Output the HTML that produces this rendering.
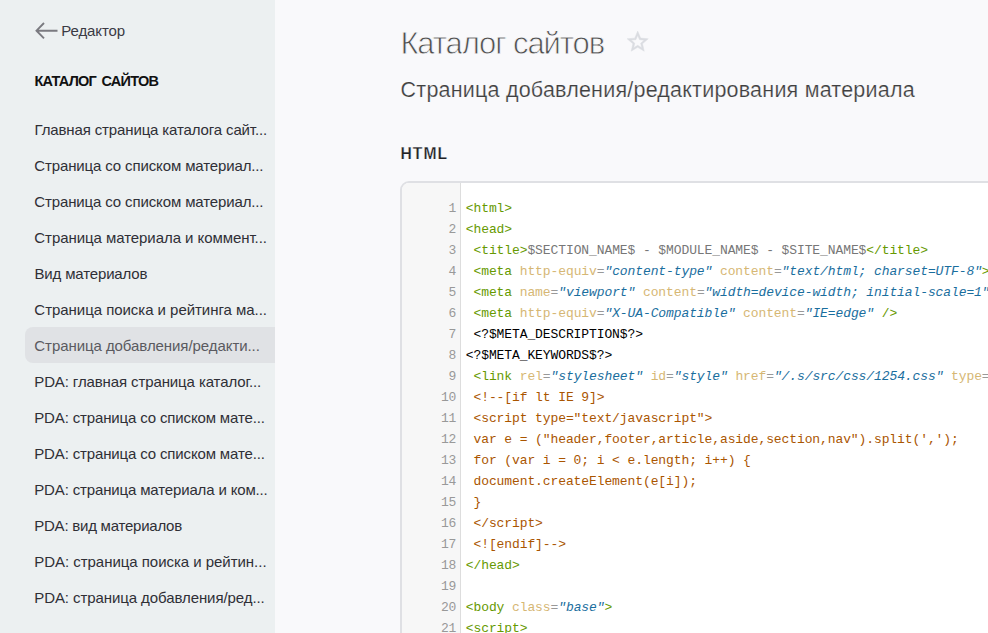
<!DOCTYPE html>
<html lang="ru">
<head>
<meta charset="utf-8">
<title>Каталог сайтов</title>
<style>
html,body{margin:0;padding:0;}
body{width:988px;height:633px;overflow:hidden;background:#f9f9fb;font-family:"Liberation Sans",sans-serif;color:#333;position:relative;}
#side{position:absolute;left:0;top:0;width:275px;height:633px;background:#ecf0f1;}
#side div,#main>div.h1,#main>div.h2,#main>div.h3{position:absolute;white-space:pre;}
.back{color:#3a3a44;}
.arrow{position:absolute;left:34.6px;top:22px;}
.sect{color:#111;}
.it{color:#2f2f36;}
.sel{left:25px;top:327px;width:250px;height:36px;background:#e0e2e5;border-radius:8px 0 0 8px;}
.h1{color:#505050;-webkit-text-stroke:0.8px #f9f9fb;}
.h2{color:#404040;-webkit-text-stroke:0.2px #f9f9fb;}
.h3{color:#202024;-webkit-text-stroke:0.25px #f9f9fb;}
.star{position:absolute;left:624.75px;top:29.35px;}
#ed{position:absolute;left:400px;top:181px;width:620px;height:480px;border:2px solid #dfe0e4;border-radius:9px 0 0 0;background:#fff;overflow:hidden;box-sizing:border-box;}
#gut{position:absolute;left:0;top:0;width:59px;height:100%;background:#f7f7f7;border-right:1px solid #dddddd;box-sizing:border-box;}
.ln{position:absolute;left:0;width:54.3px;text-align:right;font-family:"Liberation Mono",monospace;font-size:13px;line-height:21px;color:#999;letter-spacing:-0.1px;}
.cl{position:absolute;left:63.8px;font-family:"Liberation Mono",monospace;font-size:13px;line-height:21px;white-space:pre;letter-spacing:-0.1px;color:#000;}
.t{color:#690;} .a{color:#d6b774;} .p{color:#999;} .s{color:#1a6e9e;font-style:italic;} .g{color:#777;} .c{color:#a50;}
</style>
</head>
<body>
<div id="side">
<svg class="arrow" width="24" height="18" viewBox="0 0 24 18"><path d="M9 1 L1.5 8.7 L9 16.4 M1.5 8.7 H22.5" fill="none" stroke="#7a7a80" stroke-width="1.9"/></svg>
<div class="back" style="left:61.3px;top:22px;letter-spacing:-0.114px;font-size:15px;line-height:18px;">Редактор</div>
<div class="sect" style="left:34.4px;top:72px;letter-spacing:-0.738px;font-size:14.5px;line-height:18px;font-weight:bold;word-spacing:2px;">КАТАЛОГ САЙТОВ</div>
<div class="sel"></div>
<div class="it" style="left:34.5px;top:120.6px;letter-spacing:-0.131px;font-size:15px;line-height:18px;">Главная страница каталога сайт...</div>
<div class="it" style="left:34.35px;top:156.6px;letter-spacing:-0.13px;font-size:15px;line-height:18px;">Страница со списком материал...</div>
<div class="it" style="left:34.35px;top:192.6px;letter-spacing:-0.13px;font-size:15px;line-height:18px;">Страница со списком материал...</div>
<div class="it" style="left:34.35px;top:228.6px;letter-spacing:-0.06px;font-size:15px;line-height:18px;">Страница материала и коммент...</div>
<div class="it" style="left:34.5px;top:264.6px;letter-spacing:-0.154px;font-size:15px;line-height:18px;">Вид материалов</div>
<div class="it" style="left:34.35px;top:300.6px;letter-spacing:-0.039px;font-size:15px;line-height:18px;">Страница поиска и рейтинга ма...</div>
<div class="it" style="left:34.35px;top:336.6px;letter-spacing:-0.066px;font-size:15px;line-height:18px;color:#5a5a60;">Страница добавления/редакти...</div>
<div class="it" style="left:34.25px;top:372.6px;letter-spacing:-0.113px;font-size:15px;line-height:18px;">PDA: главная страница каталог...</div>
<div class="it" style="left:34.25px;top:408.6px;letter-spacing:-0.145px;font-size:15px;line-height:18px;">PDA: страница со списком мате...</div>
<div class="it" style="left:34.25px;top:444.6px;letter-spacing:-0.145px;font-size:15px;line-height:18px;">PDA: страница со списком мате...</div>
<div class="it" style="left:34.25px;top:480.6px;letter-spacing:-0.148px;font-size:15px;line-height:18px;">PDA: страница материала и ком...</div>
<div class="it" style="left:34.25px;top:516.6px;letter-spacing:-0.233px;font-size:15px;line-height:18px;">PDA: вид материалов</div>
<div class="it" style="left:34.25px;top:552.6px;letter-spacing:-0.035px;font-size:15px;line-height:18px;">PDA: страница поиска и рейтин...</div>
<div class="it" style="left:34.25px;top:588.6px;letter-spacing:-0.083px;font-size:15px;line-height:18px;">PDA: страница добавления/ред...</div>
</div>
<div id="main">
<div class="h1" style="left:400.4px;top:25.2px;letter-spacing:-1.085px;font-size:31px;line-height:38px;">Каталог сайтов</div>
<svg class="star" width="25.4" height="25.4" viewBox="0 0 24 24"><path d="M22 9.24l-7.19-.62L12 2 9.19 8.63 2 9.24l5.46 4.73L5.820 21 12 17.27 18.18 21l-1.63-7.03L22 9.24zM12 15.4l-3.76 2.27 1-4.28-3.32-2.880 4.380-.38L12 6.100l1.710 4.040 4.380.38-3.320 2.880 1 4.280L12 15.400z" fill="#dadce1" stroke="#dadce1" stroke-width="0.45" stroke-linejoin="miter"/></svg>
<div class="h2" style="left:400.6px;top:76px;letter-spacing:0.212px;font-size:21.5px;line-height:28px;">Страница добавления/редактирования материала</div>
<div class="h3" style="left:400.4px;top:145.3px;letter-spacing:1.067px;font-size:15.7px;line-height:18px;font-weight:bold;">HTML</div>
<div id="ed">
<div id="gut"></div>
<div id="lines">
<div class="ln" style="top:15px">1</div><div class="cl" style="top:15px"><span class="t">&lt;html&gt;</span></div>
<div class="ln" style="top:36px">2</div><div class="cl" style="top:36px"><span class="t">&lt;head&gt;</span></div>
<div class="ln" style="top:57px">3</div><div class="cl" style="top:57px"> <span class="t">&lt;title&gt;</span><span class="g">$SECTION_NAME$ - $MODULE_NAME$ - $SITE_NAME$</span><span class="t">&lt;/title&gt;</span></div>
<div class="ln" style="top:78px">4</div><div class="cl" style="top:78px"> <span class="t">&lt;meta</span> <span class="a">http-equiv</span><span class="p">=</span><span class="s">"content-type"</span> <span class="a">content</span><span class="p">=</span><span class="s">"text/html; charset=UTF-8"</span><span class="t">&gt;</span></div>
<div class="ln" style="top:99px">5</div><div class="cl" style="top:99px"> <span class="t">&lt;meta</span> <span class="a">name</span><span class="p">=</span><span class="s">"viewport"</span> <span class="a">content</span><span class="p">=</span><span class="s">"width=device-width; initial-scale=1"</span><span class="t">&gt;</span></div>
<div class="ln" style="top:120px">6</div><div class="cl" style="top:120px"> <span class="t">&lt;meta</span> <span class="a">http-equiv</span><span class="p">=</span><span class="s">"X-UA-Compatible"</span> <span class="a">content</span><span class="p">=</span><span class="s">"IE=edge"</span> <span class="t">/&gt;</span></div>
<div class="ln" style="top:141px">7</div><div class="cl" style="top:141px"> &lt;?$META_DESCRIPTION$?&gt;</div>
<div class="ln" style="top:162px">8</div><div class="cl" style="top:162px">&lt;?$META_KEYWORDS$?&gt;</div>
<div class="ln" style="top:183px">9</div><div class="cl" style="top:183px"> <span class="t">&lt;link</span> <span class="a">rel</span><span class="p">=</span><span class="s">"stylesheet"</span> <span class="a">id</span><span class="p">=</span><span class="s">"style"</span> <span class="a">href</span><span class="p">=</span><span class="s">"/.s/src/css/1254.css"</span> <span class="a">type</span><span class="p">=</span><span class="s">"text/css"</span> <span class="t">/&gt;</span></div>
<div class="ln" style="top:204px">10</div><div class="cl" style="top:204px"> <span class="c">&lt;!--[if lt IE 9]&gt;</span></div>
<div class="ln" style="top:225px">11</div><div class="cl" style="top:225px"> <span class="c">&lt;script type="text/javascript"&gt;</span></div>
<div class="ln" style="top:246px">12</div><div class="cl" style="top:246px"> <span class="c">var e = ("header,footer,article,aside,section,nav").split(',');</span></div>
<div class="ln" style="top:267px">13</div><div class="cl" style="top:267px"> <span class="c">for (var i = 0; i &lt; e.length; i++) {</span></div>
<div class="ln" style="top:288px">14</div><div class="cl" style="top:288px"> <span class="c">document.createElement(e[i]);</span></div>
<div class="ln" style="top:309px">15</div><div class="cl" style="top:309px"> <span class="c">}</span></div>
<div class="ln" style="top:330px">16</div><div class="cl" style="top:330px"> <span class="c">&lt;/script&gt;</span></div>
<div class="ln" style="top:351px">17</div><div class="cl" style="top:351px"> <span class="c">&lt;![endif]--&gt;</span></div>
<div class="ln" style="top:372px">18</div><div class="cl" style="top:372px"><span class="t">&lt;/head&gt;</span></div>
<div class="ln" style="top:393px">19</div><div class="cl" style="top:393px"></div>
<div class="ln" style="top:414px">20</div><div class="cl" style="top:414px"><span class="t">&lt;body</span> <span class="a">class</span><span class="p">=</span><span class="s">"base"</span><span class="t">&gt;</span></div>
<div class="ln" style="top:435px">21</div><div class="cl" style="top:435px"><span class="t">&lt;script&gt;</span></div>
<div class="ln" style="top:456px">22</div><div class="cl" style="top:456px"> </div>
</div>
</div>
</div>
</body>
</html>
